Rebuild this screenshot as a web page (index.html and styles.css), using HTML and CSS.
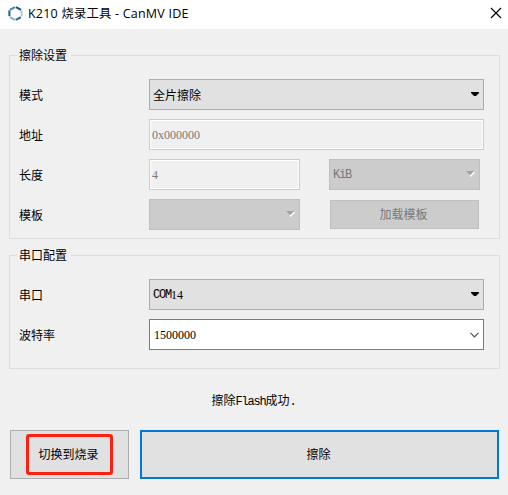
FILE: index.html
```html
<!DOCTYPE html>
<html lang="zh-CN">
<head>
<meta charset="utf-8">
<title>K210 烧录工具 - CanMV IDE</title>
<link rel="stylesheet" href="styles.css">
</head>
<body>
<header class="titlebar">
  <svg class="logo" width="15" height="15" viewBox="0 0 14 14" fill="none" stroke-width="1.9">
    <path d="M6.6 1 1.8 3.5" stroke="#4d86a8"/>
    <path d="M1.3 4.1v5.4" stroke="#1d5f8c"/>
    <path d="M1.8 10.4 6.4 12.9" stroke="#8fb0c6"/>
    <path d="M7.2 13 12 10.5" stroke="#2f7099"/>
    <path d="M12.7 9.7v-5.4" stroke="#b3c8d6"/>
    <path d="M12.2 3.6 7.4 1" stroke="#15557f"/>
  </svg>
  <h1 class="title">K210 <span class="title-cjk">烧录工具</span> - CanMV IDE</h1>
  <svg class="close" width="10" height="10" viewBox="0 0 10 10" fill="none" stroke="#000" stroke-width="1.15"><path d="M0 0 10 10M10 0 0 10"/></svg>
</header>
<main class="content">
  <section class="group erase">
    <h2 class="legend">擦除设置</h2>
    <div class="row"><span class="label">模式</span>
      <div class="field combo wide"><span class="text">全片擦除</span><svg class="arrow" width="8" height="4" viewBox="0 0 8 4"><path d="M0 0h8v1L5 4H3L0 1z"/></svg></div></div>
    <div class="row"><span class="label">地址</span>
      <div class="field input off wide"><span class="num">0x000000</span></div></div>
    <div class="row"><span class="label">长度</span>
      <div class="field input off half"><span class="num">4</span></div>
      <div class="field combo off half"><span class="mono">KiB</span><svg class="arrow" width="9" height="6" viewBox="0 0 9 6"><path d="M4 5.5 8.5 1" stroke="#fff" stroke-width="1.5"/><path d="M0 0h8L4 4z" fill="#a0a0a0"/></svg></div></div>
    <div class="row"><span class="label">模板</span>
      <div class="field combo off half"><svg class="arrow" width="9" height="6" viewBox="0 0 9 6"><path d="M4 5.5 8.5 1" stroke="#fff" stroke-width="1.5"/><path d="M0 0h8L4 4z" fill="#a0a0a0"/></svg></div>
      <div class="load">加载模板</div></div>
  </section>
  <section class="group serial">
    <h2 class="legend">串口配置</h2>
    <div class="row"><span class="label">串口</span>
      <div class="field combo wide"><span class="mono">COM</span><span class="num">14</span><svg class="arrow" width="8" height="4" viewBox="0 0 8 4"><path d="M0 0h8v1L5 4H3L0 1z"/></svg></div></div>
    <div class="row"><span class="label">波特率</span>
      <div class="field editable wide"><span class="num">1500000</span><svg class="arrow" width="9" height="6" viewBox="0 0 9 6" fill="none" stroke="#555" stroke-width="1.2"><path d="M.5.8 4.5 4.8 8.5.8"/></svg></div></div>
  </section>
  <p class="status">擦除<span class="mono">Flash</span>成功<span class="mono">.</span></p>
  <div class="actions">
    <div class="button switch"><span class="mark">切换到烧录</span></div>
    <div class="button primary">擦除</div>
  </div>
</main>
</body>
</html>
```
FILE: styles.css
```css
* { box-sizing: border-box; }
body {
  margin: 0;
  height: 495px;
  overflow: hidden;
  background: #f0f0f0;
  color: #000;
  font: 12px/16px "Liberation Serif", "Noto Sans CJK SC", sans-serif;
}
h1, h2, p { margin: 0; font-weight: 400; }
.titlebar {
  display: flex;
  align-items: center;
  height: 29px;
  padding: 0 7px 3px 8px;
  background: #fff;
}
.logo { flex: none; }
.title {
  margin: 2px 0 0 5px;
  font: 12.5px/18px "Open Sans", "Noto Sans CJK SC", sans-serif;
  letter-spacing: .22px;
  white-space: pre;
}
.title-cjk { font-size: 12.3px; }
.close { margin-left: auto; overflow: visible; }
.content { padding: 26px 8px 0 9px; }
.group {
  border: 1px solid #dcdcdc;
  padding: 0 15px 0 9px;
}
.erase { height: 184px; }
.serial { height: 114px; margin-top: 16px; }
.legend {
  width: 54px;
  height: 18px;
  margin: -9px 0 14px -2px;
  padding-left: 2px;
  background: #f0f0f0;
  font-size: 12px;
  line-height: 18px;
}
.row {
  display: flex;
  align-items: center;
  height: 31px;
  margin-bottom: 9px;
}
.label { width: 130px; padding-top: 2px; }
.field {
  display: flex;
  align-items: center;
  height: 31px;
  padding-left: 3px;
  border: 1px solid #adadad;
  background: #e1e1e1;
}
.text { padding-top: 2px; }
.wide { width: 335px; }
.half { width: 151px; }
.half + .half { margin-left: 29px; }
.arrow { margin: 0 4px 2px auto; }
.off { color: #787878; border-color: #bfbfbf; background: #ccc; }
.off .arrow { margin: 0 4px 2px auto; }
.input.off {
  padding-left: 2px;
  border-color: #ccc;
  background: #f0f0f0;
  box-shadow: inset 0 0 0 1px #fff;
}
.editable { padding-left: 4px; border-color: #7a7a7a; background: #fff; }
.editable .arrow { margin-right: 4px; margin-bottom: 0; }
.load {
  width: 149px;
  height: 29px;
  margin-left: 30px;
  padding-right: 2px;
  border: 1px solid #bfbfbf;
  background: #ccc;
  color: #787878;
  text-align: center;
  line-height: 29px;
}
.mono { font-family: "Liberation Mono", monospace; letter-spacing: -1.2px; }
.num { font-family: "Liberation Serif", serif; }
.status { margin-top: 24px; padding-right: 2px; text-align: center; }
.actions { display: flex; gap: 11px; margin: 20px 1px 0; }
.button {
  display: flex;
  align-items: center;
  justify-content: center;
  height: 49px;
  border: 1px solid #adadad;
  background: #e1e1e1;
}
.switch { width: 119px; }
.mark {
  width: 87px;
  height: 41px;
  padding-right: 2px;
  border: 3px solid #ff1f13;
  border-radius: 3px;
  line-height: 36px;
  text-align: center;
}
.primary { width: 359px; padding: 1px 2px 0 0; border: 2px solid #0078d7; }
```
